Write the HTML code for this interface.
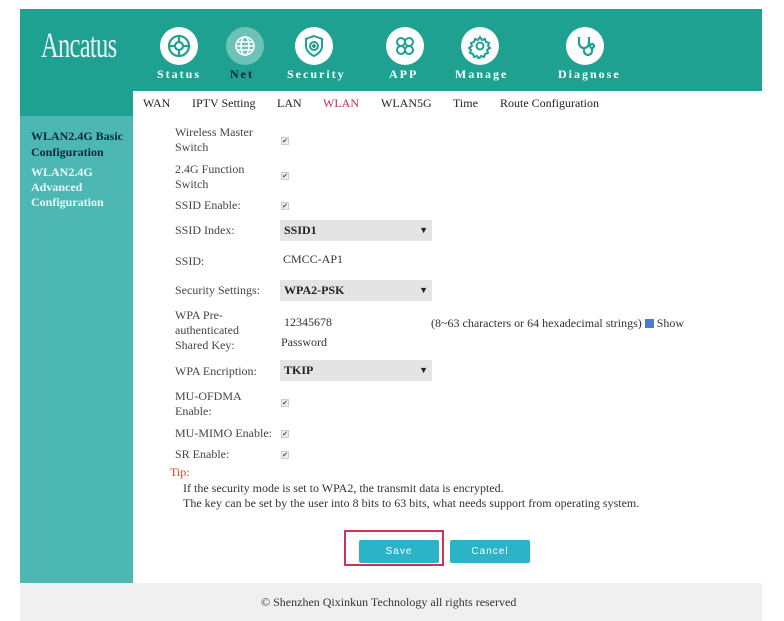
<!DOCTYPE html>
<html><head><meta charset="utf-8"><style>
*{margin:0;padding:0;box-sizing:border-box}
body{width:784px;height:621px;background:#fff;font-family:"Liberation Serif",serif;font-size:12px;color:#333;position:relative;overflow:hidden}
.a{position:absolute}
.hdr{left:20px;top:9px;width:742px;height:107px;background:#1fa191}
.sub{left:133px;top:91px;width:629px;height:25px;background:#fff}
.side{left:20px;top:116px;width:113px;height:467px;background:#4db8b3}
.foot{left:20px;top:583px;width:742px;height:38px;background:#f0f0f0}
.ic{width:38px;height:38px;border-radius:50%;background:#fff;display:flex;align-items:center;justify-content:center}
.lab{color:#fff;font-weight:bold;font-size:12px;letter-spacing:2px;top:67px}
.nav{top:96px;font-size:12px;color:#222}
.lbl{left:175px;color:#444;line-height:15px}
.cb{width:8px;height:8px;border:1px solid #ccc;background:#eee;font-size:7px;line-height:7px;text-align:center;color:#555}
.sel{left:280px;width:152px;height:21px;background:#e4e4e4;font-weight:bold;color:#222;padding:3px 4px}
.sel:after{content:"▼";position:absolute;right:4px;top:5px;font-size:9px}
.btn{top:540px;width:80px;height:23px;background:#2bb3c8;color:#fff;font-family:"Liberation Sans",sans-serif;font-size:10px;letter-spacing:1px;text-align:center;line-height:23px;border-radius:2px}
</style></head><body>
<div class="a hdr"></div>
<div class="a sub"></div>
<div class="a side"></div>
<div class="a foot"></div>
<div class="a" style="left:41px;top:24px;color:#e8f5f3;font-size:36px;transform:scaleX(0.68);transform-origin:left;letter-spacing:-1px">Ancatus</div>

<div class="a ic" style="left:160px;top:27px"><svg width="26" height="26" viewBox="0 0 26 26" fill="none" stroke="#1fa191" stroke-width="2.2"><circle cx="13" cy="13" r="10"/><circle cx="13" cy="13" r="4"/><path d="M13 3v5M13 18v5M3 13h5M18 13h5"/></svg></div>
<div class="a ic" style="left:226px;top:27px;background:rgba(255,255,255,.35)"><svg width="26" height="26" viewBox="0 0 26 26" fill="none" stroke="#fff" stroke-width="1.6"><circle cx="13" cy="13" r="9"/><ellipse cx="13" cy="13" rx="4" ry="9"/><path d="M4 13h18M5 9h16M5 17h16"/></svg></div>
<div class="a ic" style="left:295px;top:27px"><svg width="26" height="26" viewBox="0 0 26 26" fill="none" stroke="#1fa191" stroke-width="2"><path d="M13 3l8 3v7c0 5-4 8-8 10-4-2-8-5-8-10V6z"/><circle cx="13" cy="13" r="4"/><path d="M13 11v4M11 13h4"/></svg></div>
<div class="a ic" style="left:386px;top:27px"><svg width="26" height="26" viewBox="0 0 26 26" fill="none" stroke="#1fa191" stroke-width="2"><circle cx="9" cy="9" r="4"/><circle cx="17" cy="9" r="4"/><circle cx="9" cy="17" r="4"/><circle cx="17" cy="17" r="4"/></svg></div>
<div class="a ic" style="left:461px;top:27px"><svg width="26" height="26" viewBox="0 0 26 26" fill="none" stroke="#1fa191" stroke-width="2"><circle cx="13" cy="13" r="3.5"/><path d="M13 4l2 3 3-1 1 3 3 1-1 3 2 2-3 2 1 3-3 1-1 3-3-1-2 3-2-3-3 1-1-3-3-1 1-3-2-2 3-2-1-3 3-1 1-3 3 1z"/></svg></div>
<div class="a ic" style="left:566px;top:27px"><svg width="26" height="26" viewBox="0 0 26 26" fill="none" stroke="#1fa191" stroke-width="2.2"><path d="M7 4v6a5 5 0 0010 0V4M12 15v3a4 4 0 008 0v-3"/><circle cx="20" cy="13" r="2"/></svg></div>

<div class="a lab" style="left:157px">Status</div>
<div class="a lab" style="left:230px;color:#123">Net</div>
<div class="a lab" style="left:287px">Security</div>
<div class="a lab" style="left:389px">APP</div>
<div class="a lab" style="left:455px">Manage</div>
<div class="a lab" style="left:558px">Diagnose</div>

<div class="a nav" style="left:143px">WAN</div>
<div class="a nav" style="left:192px">IPTV Setting</div>
<div class="a nav" style="left:277px">LAN</div>
<div class="a nav" style="left:323px;color:#c0304a">WLAN</div>
<div class="a nav" style="left:381px">WLAN5G</div>
<div class="a nav" style="left:453px">Time</div>
<div class="a nav" style="left:500px">Route Configuration</div>

<div class="a" style="left:31px;top:128px;font-weight:bold;color:#0d2a3a;line-height:16px">WLAN2.4G Basic<br>Configuration</div>
<div class="a" style="left:31px;top:165px;font-weight:bold;color:#e8f8f6;line-height:15px">WLAN2.4G<br>Advanced<br>Configuration</div>

<div class="a lbl" style="top:125px">Wireless Master<br>Switch</div><div class="a cb" style="left:281px;top:137px">✔</div>
<div class="a lbl" style="top:162px">2.4G Function<br>Switch</div><div class="a cb" style="left:281px;top:172px">✔</div>
<div class="a lbl" style="top:198px">SSID Enable:</div><div class="a cb" style="left:281px;top:202px">✔</div>
<div class="a lbl" style="top:223px">SSID Index:</div><div class="a sel" style="top:220px">SSID1</div>
<div class="a lbl" style="top:254px">SSID:</div><div class="a" style="left:280px;top:249px;width:102px;height:21px;background:#fff;padding:3px 3px">CMCC-AP1</div>
<div class="a lbl" style="top:283px">Security Settings:</div><div class="a sel" style="top:280px">WPA2-PSK</div>
<div class="a lbl" style="top:308px">WPA Pre-<br>authenticated<br>Shared Key:</div>
<div class="a" style="left:280px;top:312px;width:148px;height:21px;background:#fff;padding:3px 4px">12345678</div>
<div class="a" style="left:431px;top:316px">(8~63 characters or 64 hexadecimal strings) <span style="display:inline-block;width:9px;height:9px;background:#4a7fd0;vertical-align:-1px"></span> Show</div>
<div class="a" style="left:281px;top:335px">Password</div>
<div class="a lbl" style="top:364px">WPA Encription:</div><div class="a sel" style="top:360px">TKIP</div>
<div class="a lbl" style="top:389px">MU-OFDMA<br>Enable:</div><div class="a cb" style="left:281px;top:399px">✔</div>
<div class="a lbl" style="top:426px">MU-MIMO Enable:</div><div class="a cb" style="left:281px;top:430px">✔</div>
<div class="a lbl" style="top:447px">SR Enable:</div><div class="a cb" style="left:281px;top:451px">✔</div>

<div class="a" style="left:170px;top:465px;color:#d0452a">Tip:</div>
<div class="a" style="left:183px;top:481px;line-height:15px">If the security mode is set to WPA2, the transmit data is encrypted.<br>The key can be set by the user into 8 bits to 63 bits, what needs support from operating system.</div>

<div class="a btn" style="left:359px">Save</div>
<div class="a btn" style="left:450px">Cancel</div>
<div class="a" style="left:344px;top:530px;width:100px;height:36px;border:2px solid #d0305a"></div>

<div class="a" style="left:261px;top:595px;color:#333">© Shenzhen Qixinkun Technology all rights reserved</div>
</body></html>
